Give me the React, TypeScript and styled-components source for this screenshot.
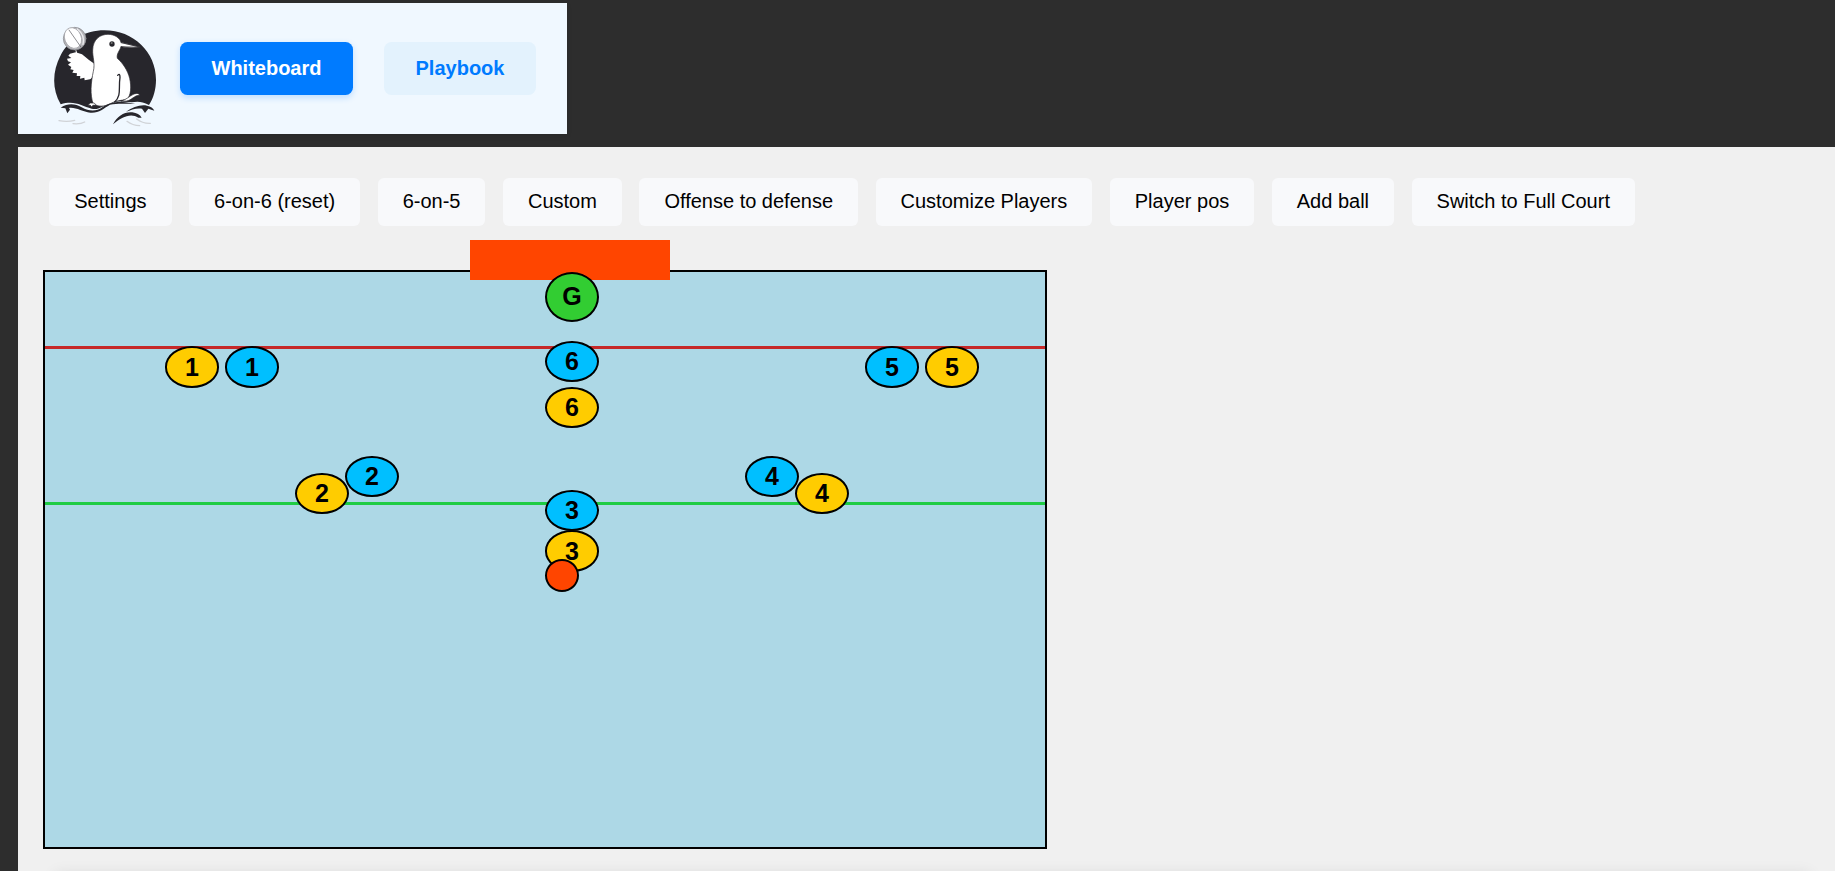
import React from "react";
import styled, { createGlobalStyle } from "styled-components";

const GlobalStyle = createGlobalStyle`
  *, *::before, *::after { box-sizing: border-box; }
  body {
    margin: 0;
    background: #2d2d2d;
    font-family: Arial, "Liberation Sans", sans-serif;
    color: #000;
  }
`;

const Page = styled.div`
  height: 871px;
  overflow: hidden;
  padding: 3px 0 0 18px;
`;

const Header = styled.header`
  display: flex;
  align-items: flex-start;
  width: 549px;
  height: 131px;
  padding-left: 22px;
  background: #f0f8ff;
  box-shadow: 0 2px 5px rgba(0, 0, 0, 0.1);
`;

const Logo = styled.svg`
  width: 130px;
  height: 120px;
  margin-top: 12px;
  flex: none;
`;

const Tabs = styled.nav`
  display: flex;
  gap: 31px;
  margin: 39px 0 0 10px;
`;

const Tab = styled.button<{ $active?: boolean; $width: number }>`
  width: ${(p) => p.$width}px;
  height: 53px;
  padding: 0;
  border: 0;
  border-radius: 7.5px;
  font: bold 20px Arial, "Liberation Sans", sans-serif;
  color: ${(p) => (p.$active ? "#fff" : "#007bff")};
  background: ${(p) => (p.$active ? "#007bff" : "#e3f2fd")};
  box-shadow: ${(p) => (p.$active ? "0 2.5px 6px rgba(0, 123, 255, 0.2)" : "none")};
`;

const Panel = styled.main`
  height: 724px;
  margin-top: 13px;
  padding: 31px 0 0 25px;
  background: #f0f0f0;
`;

const Toolbar = styled.div`
  display: flex;
  gap: 17.5px;
  padding-left: 6.25px;
`;

const ToolButton = styled.button`
  height: 48px;
  padding: 0 25px 2px;
  border: 0;
  border-radius: 6px;
  background: #f8f9fb;
  color: #000;
  white-space: nowrap;
  font: 20px Arial, "Liberation Sans", sans-serif;
`;

const Court = styled.section`
  position: relative;
  width: 1004px;
  height: 579px;
  margin-top: 44px;
  border: 2px solid #000;
  background: #add8e6;
`;

const Goal = styled.div`
  position: absolute;
  left: 425px;
  top: -32px;
  width: 200px;
  height: 40px;
  background: #ff4500;
`;

const CourtLine = styled.div<{ $y: number; $color: string }>`
  position: absolute;
  left: 0;
  right: 0;
  top: ${(p) => p.$y}px;
  height: 3px;
  background: ${(p) => p.$color};
`;

const teamColors = { gold: "#ffcc00", blue: "#00bfff", keeper: "#32cd32" };

const Player = styled.div<{ $x: number; $y: number; $team: keyof typeof teamColors }>`
  position: absolute;
  left: ${(p) => p.$x}px;
  top: ${(p) => p.$y}px;
  display: flex;
  align-items: center;
  justify-content: center;
  width: 54px;
  height: ${(p) => (p.$team === "keeper" ? 50 : 41.25)}px;
  padding-bottom: 1px;
  border: 2px solid #000;
  border-radius: 50%;
  background: ${(p) => teamColors[p.$team]};
  font-size: 25px;
  font-weight: bold;
  line-height: 28px;
`;

const Ball = styled.div`
  position: absolute;
  left: 500px;
  top: 287px;
  width: 34px;
  height: 33px;
  border: 2px solid #000;
  border-radius: 50%;
  background: #ff4500;
`;

const NotesCard = styled.div`
  height: 60px;
  margin: 25px 25px 0 12px;
  background: #fff;
  box-shadow: 0 0 14px rgba(0, 0, 0, 0.1);
`;

const tools = [
  "Settings",
  "6-on-6 (reset)",
  "6-on-5",
  "Custom",
  "Offense to defense",
  "Customize Players",
  "Player pos",
  "Add ball",
  "Switch to Full Court",
];

const players: { x: number; y: number; team: keyof typeof teamColors; label: string }[] = [
  { x: 120, y: 74.45, team: "gold", label: "1" },
  { x: 250, y: 201, team: "gold", label: "2" },
  { x: 500, y: 258.45, team: "gold", label: "3" },
  { x: 750, y: 201, team: "gold", label: "4" },
  { x: 880, y: 74.45, team: "gold", label: "5" },
  { x: 500, y: 115, team: "gold", label: "6" },
  { x: 180, y: 74.45, team: "blue", label: "1" },
  { x: 300, y: 184, team: "blue", label: "2" },
  { x: 500, y: 218, team: "blue", label: "3" },
  { x: 700, y: 184, team: "blue", label: "4" },
  { x: 820, y: 74.45, team: "blue", label: "5" },
  { x: 500, y: 69, team: "blue", label: "6" },
  { x: 500, y: -0.2, team: "keeper", label: "G" },
];

function PenguinLogo() {
  return (
    <Logo viewBox="0 0 390 360" fill="none" strokeLinecap="round" strokeLinejoin="round">
      <path
        fill="#27262c"
        d="M62 268C36 223 36 171 62 121C85 75 136 46 193 46C281 46 348 112 348 194C348 222 341 249 327 270C305 258 290 260 275 262C245 258 225 258 205 264C190 273 175 286 155 281C125 274 105 255 62 268Z"
      />
      <path
        fill="#fff"
        d="M164 147L147 135L126 118L107 112L90 116L85 122L94 129L81 131L84 139L93 142L84 149L94 156L91 163L101 165L97 173L111 175L110 183L121 183L120 191L133 188L134 196L150 193C159 188 161 178 164 165Z"
      />
      <path
        fill="#fff"
        stroke="#27262c"
        strokeWidth="2"
        d="M160 268C149 239 153 202 160 169C166 145 157 125 158 105C159 72 181 58 204 58C225 58 240 70 243 82L304 97C284 99 262 99 243 95C239 108 229 116 232 130C249 145 263 166 269 190C275 218 272 240 262 253C241 257 228 256 211 266C193 276 174 275 160 268Z"
      />
      <path stroke="#27262c" strokeWidth="4" d="M233 181Q240 173 240 187C235 220 245 242 224 261" />
      <path stroke="#27262c" strokeWidth="2" d="M243 83L304 97L243 95" />
      <circle cx="216" cy="87" r="8" fill="#27262c" />
      <circle cx="215" cy="84" r="3" fill="#777" />
      <path
        fill="#fff"
        stroke="#27262c"
        strokeWidth="2"
        d="M244 258C260 254 268 243 282 237Q297 232 299 241C283 240 276 256 260 258Z"
      />
      <path fill="#27262c" d="M62 278C85 263 106 266 125 277C148 290 169 290 187 277C206 262 232 259 257 262L286 266C258 267 233 264 210 269C189 281 177 295 151 293C127 291 108 276 87 279L90 284L82 295L76 280Z" />
      <path fill="#fff" stroke="#27262c" strokeWidth="2" d="M143 271L151 264L162 264L169 270L159 271L155 275L151 271Z" />
      <path fill="#27262c" d="M258 290C279 276 301 268 321 272Q338 275 343 287L325 281L315 294L306 281C289 278 273 285 258 290Z" />
      <path fill="#27262c" d="M219 328C231 303 255 289 277 292Q297 295 305 308L295 308C272 293 245 306 219 328Z" />
      <path stroke="#d0d3d7" strokeWidth="4" d="M57 317Q82 322 104 316M99 326Q122 328 134 321M261 319Q278 332 299 332M290 312Q308 326 331 325" />
      <circle cx="104" cy="71" r="34" fill="#b4b4b8" stroke="#85858a" strokeWidth="2" />
      <ellipse cx="99" cy="69" rx="25" ry="32" transform="rotate(-22 99 69)" fill="#fff" stroke="#9b9ba0" strokeWidth="2" />
      <path stroke="#ececef" strokeWidth="4" d="M112 42Q136 61 129 88" />
      <path stroke="#55555a" strokeWidth="2" d="M87 45L122 95" />
      <path stroke="#fff" strokeWidth="3" d="M108 107L110 115" />
    </Logo>
  );
}

export default function App() {
  return (
    <>
      <GlobalStyle />
      <Page>
        <Header>
          <PenguinLogo />
          <Tabs>
            <Tab $active $width={173}>Whiteboard</Tab>
            <Tab $width={152}>Playbook</Tab>
          </Tabs>
        </Header>
        <Panel>
          <Toolbar>
            {tools.map((tool) => (
              <ToolButton key={tool}>{tool}</ToolButton>
            ))}
          </Toolbar>
          <Court>
            <Goal />
            <CourtLine $y={74} $color="#c62828" />
            <CourtLine $y={230} $color="#1fcc44" />
            {players.map((p) => (
              <Player key={p.team + p.label} $x={p.x} $y={p.y} $team={p.team}>
                {p.label}
              </Player>
            ))}
            <Ball />
          </Court>
          <NotesCard />
        </Panel>
      </Page>
    </>
  );
}
